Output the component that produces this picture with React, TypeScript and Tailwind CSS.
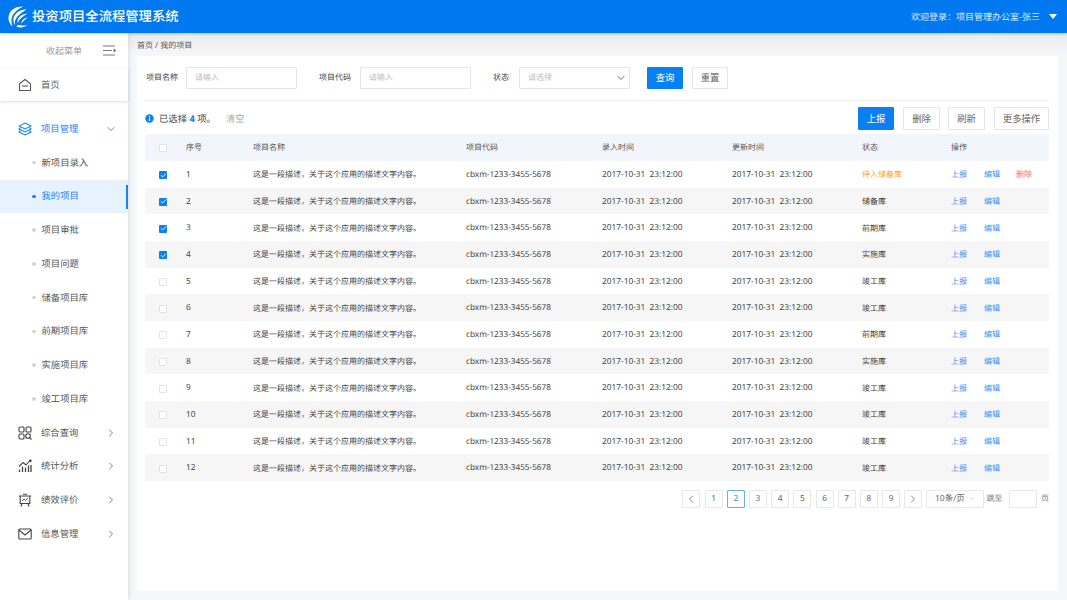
import { ChevronDown, ChevronLeft, ChevronRight, Check } from "lucide-react"
import type { ReactNode } from "react"

const font = "[font-family:'Noto_Sans','Noto_Sans_CJK_SC',sans-serif] [text-rendering:geometricPrecision]"

const subMenu = ["新项目录入", "我的项目", "项目审批", "项目问题", "储备项目库", "前期项目库", "实施项目库", "竣工项目库"]

const rows = [
  { status: "待入储备库", checked: true, remove: true },
  { status: "储备库", checked: true },
  { status: "前期库", checked: true },
  { status: "实施库", checked: true },
  { status: "竣工库" },
  { status: "竣工库" },
  { status: "前期库" },
  { status: "实施库" },
  { status: "竣工库" },
  { status: "竣工库" },
  { status: "竣工库" },
  { status: "竣工库" },
]

function Logo() {
  return (
    <svg width="20" height="22" viewBox="0 0 20 22" fill="#fff">
      <path d="M15 .6C9 .2 3.500 3 1.300 8c-1.800 4-.6 9 3.200 12.500C2.600 15.500 3.200 10.800 6 7.500 8.500 4.500 11.500 2.500 15 .6z" />
      <path d="M18.500 3.500C13.500 3.300 9 5.500 6.600 9.500c-2 3.400-1.600 7 .4 9.800-.6-3.300.3-6.500 2.700-9 2.300-2.500 5.300-4.600 8.800-6.800z" />
      <path d="M19.500 7.500c-3.600.2-6.800 1.700-8.700 4.300-1.300 1.800-1.500 3.700-1 5.500.5-2.300 1.900-4.300 4-5.900 1.600-1.300 3.500-2.500 5.700-3.900z" />
      <path d="M19.600 11.500c-2.600.5-4.600 1.800-5.700 3.600-.5.900-.6 1.700-.4 2.500 1.200-2 3.300-3.800 6.100-6.100z" />
      <path d="M8.500 20.500c3.500 1.500 7.500 1.300 11-1.800-3 .9-6 1.200-9 .4-1-.3-1.700.6-2 1.400z" />
    </svg>
  )
}

function HomeIcon() {
  return (
    <svg width="14" height="14" viewBox="0 0 14 14" fill="none" stroke="#555" strokeWidth="1.100">
      <path d="M1.500 5.800 7 1.500l5.500 4.300v6.700h-11z" />
      <path d="M3.800 8h6.400" />
    </svg>
  )
}

function LayersIcon() {
  return (
    <svg width="14" height="14" viewBox="0 0 14 14" fill="none" stroke="#1a83f0" strokeWidth="1.100">
      <path d="M7 1 13 4 7 7 1 4z" />
      <path d="M2.500 5.500 1 7l6 3 6-3-1.500-1.500" />
      <path d="M2.500 8.500 1 10l6 3 6-3-1.500-1.500" />
    </svg>
  )
}

function QueryIcon() {
  return (
    <svg width="14" height="14" viewBox="0 0 14 14" fill="none" stroke="#444" strokeWidth="1.100">
      <rect x="1" y="1" width="5" height="5" rx="1" />
      <rect x="8" y="1" width="5" height="5" rx="1" />
      <rect x="1" y="8" width="5" height="5" rx="1" />
      <circle cx="10" cy="10" r="2.300" />
      <path d="m11.800 11.800 1.700 1.700" />
    </svg>
  )
}

function StatIcon() {
  return (
    <svg width="14" height="14" viewBox="0 0 14 14" fill="none" stroke="#444" strokeWidth="1.100">
      <path d="M1 7.500 5 3.500l3 2.500 3.500-4" />
      <circle cx="12.300" cy="1.800" r=".8" fill="#444" />
      <path d="M1.500 13v-2.500M4.500 13V7.500M7.500 13V8.500M10.500 13V6.500M13 13V6" strokeWidth="1.300" />
    </svg>
  )
}

function EvalIcon() {
  return (
    <svg width="14" height="14" viewBox="0 0 14 14" fill="none" stroke="#444" strokeWidth="1.100">
      <path d="M.8 3h12.400M2.200 3v7.500h9.600V3M5 1.200h4" />
      <path d="m4 8 2-2 1.500 1.300L10 5" strokeWidth=".9" />
      <path d="m4 10.500-1 3M10 10.500l1 3" />
    </svg>
  )
}

function MailIcon() {
  return (
    <svg width="14" height="14" viewBox="0 0 14 14" fill="none" stroke="#444" strokeWidth="1.100">
      <rect x=".8" y="2" width="12.400" height="10" rx="1" />
      <path d="m1 3 6 5 6-5" />
    </svg>
  )
}

function CollapseIcon() {
  return (
    <svg width="14" height="11" viewBox="0 0 14 11" fill="none" stroke="#777" strokeWidth="1">
      <path d="M0 1h12M0 5.500h9M0 10h12" />
      <path d="m10.500 3.500 3 2-3 2z" fill="#777" stroke="none" />
    </svg>
  )
}

function InfoDot() {
  return (
    <svg width="9" height="9" viewBox="0 0 9 9">
      <circle cx="4.500" cy="4.500" r="4.200" fill="#0a80f5" />
      <path d="M3.900 1.900h1.200v1.100H3.900zM3.900 3.700h1.200v3.400H3.900z" fill="#fff" />
    </svg>
  )
}

function NavRow({ icon, label, active }: { icon: ReactNode; label: string; active?: boolean }) {
  return (
    <div className={`flex h-[33.75px] items-center pl-[18px] pr-[11px] ${active ? "text-[#1a83f0]" : "text-[#555]"}`}>
      <span className="flex w-[14px] justify-center">{icon}</span>
      <span className="ml-[9px] flex-1 text-[9.33px]">{label}</span>
      {active ? <ChevronDown size={12} strokeWidth={1.700} /> : <ChevronRight size={12} strokeWidth={1.500} />}
    </div>
  )
}

function Sidebar() {
  return (
    <aside className="z-10 flex w-[128px] shrink-0 flex-col bg-white shadow-[1px_0_5px_rgba(0,0,0,0.1)]">
      <div className="flex h-[35px] items-center pl-[46px] pr-[11px] text-[9px] text-[#999]">
        <span className="flex-1">收起菜单</span>
        <CollapseIcon />
      </div>
      <div className="flex h-[33px] items-center gap-[9px] rounded-b-[1px] pl-[18px] text-[9.33px] text-[#555] shadow-[0_1px_3px_rgba(26,131,240,0.25)]">
        <span className="flex w-[14px] justify-center"><HomeIcon /></span>
        <span>首页</span>
      </div>
      <div className="mt-[11px]">
        <NavRow icon={<LayersIcon />} label="项目管理" active />
      </div>
      {subMenu.map((name) => {
        const current = name === "我的项目"
        return (
          <div
            key={name}
            className={`relative flex h-[33.75px] items-center pl-[32px] text-[9.33px] ${current ? "bg-[#e6f2fe] text-[#1a83f0]" : "text-[#555]"}`}
          >
            <span className={`mr-[6px] size-[3.500px] rounded-full ${current ? "bg-[#1a83f0]" : "bg-[#d4d4d4]"}`} />
            {name}
            {current && <span className="absolute right-0 top-[5px] h-[24px] w-[2px] bg-[#1a83f0]" />}
          </div>
        )
      })}
      <NavRow icon={<QueryIcon />} label="综合查询" />
      <NavRow icon={<StatIcon />} label="统计分析" />
      <NavRow icon={<EvalIcon />} label="绩效评价" />
      <NavRow icon={<MailIcon />} label="信息管理" />
    </aside>
  )
}

function Btn({ children, primary, className = "" }: { children: ReactNode; primary?: boolean; className?: string }) {
  return (
    <button
      className={`flex h-[22px] items-center justify-center rounded-[1px] text-[9.33px] ${primary ? "bg-[#0a80f5] text-white" : "border border-[#e6e6e6] bg-white text-[#666]"} ${className}`}
    >
      {children}
    </button>
  )
}

function Field({ label, placeholder, labelClass, select }: { label: string; placeholder: string; labelClass: string; select?: boolean }) {
  return (
    <>
      <span className={`text-[8px] text-[#444] ${labelClass}`}>{label}</span>
      <div className="flex h-[22px] w-[111px] items-center justify-between rounded-[1px] border border-[#e6e6e6] pl-[8px] pr-[2px] text-[8px] text-[#bbb]">
        {placeholder}
        {select && <ChevronDown size={12} strokeWidth={1.600} className="text-[#444]" />}
      </div>
    </>
  )
}

function Checkbox({ checked }: { checked?: boolean }) {
  return (
    <span className={`flex size-[8px] items-center justify-center rounded-[1px] ${checked ? "bg-[#0a80f5]" : "border border-[#e3e3e3] bg-white"}`}>
      {checked && <Check size={7} strokeWidth={3} className="text-white" />}
    </span>
  )
}

const tableCols = "grid-cols-[41px_67px_213px_136px_130px_130px_89px_33px_32px_33px]"

function Table() {
  return (
    <div className="mt-[4px] text-[8px] text-[#444]">
      <div className={`grid h-[27px] items-center bg-[#f2f5fc] pt-[1px] text-[#555] ${tableCols}`}>
        <span className="flex pl-[14px]"><Checkbox /></span>
        <span>序号</span>
        <span>项目名称</span>
        <span>项目代码</span>
        <span>录入时间</span>
        <span>更新时间</span>
        <span>状态</span>
        <span>操作</span>
      </div>
      {rows.map((row, i) => (
        <div key={i} className={`grid h-[26.67px] items-center pt-[2px] ${tableCols} ${i % 2 ? "bg-[#f6f6f6]" : "bg-white"}`}>
          <span className="flex pl-[14px]"><Checkbox checked={row.checked} /></span>
          <span className="text-[8.3px]">{i + 1}</span>
          <span>这是一段描述，关于这个应用的描述文字内容。</span>
          <span className="text-[8.2px]">cbxm-1233-3455-5678</span>
          <span className="text-[8.3px]">2017-10-31&nbsp;&nbsp;23:12:00</span>
          <span className="text-[8.3px]">2017-10-31&nbsp;&nbsp;23:12:00</span>
          <span className={row.remove ? "text-[#f9a63a]" : ""}>{row.status}</span>
          <span className="text-[#2f8ff2]">上报</span>
          <span className="text-[#2f8ff2]">编辑</span>
          {row.remove && <span className="text-[#f56c7a]">删除</span>}
        </div>
      ))}
    </div>
  )
}

function PageBox({ children, active }: { children: ReactNode; active?: boolean }) {
  return (
    <span className={`flex size-[18px] items-center justify-center rounded-[1px] border text-[8.3px] ${active ? "border-[#66aef7] text-[#2f8ff2]" : "border-[#e8e8e8] text-[#666]"}`}>
      {children}
    </span>
  )
}

function Pagination() {
  return (
    <div className="mt-[9px] flex items-center justify-end gap-[4.200px] text-[8px] text-[#777]">
      <PageBox><ChevronLeft size={12} strokeWidth={1.500} className="text-[#555]" /></PageBox>
      {[1, 2, 3, 4, 5, 6, 7, 8, 9].map((n) => (
        <PageBox key={n} active={n === 2}>{n}</PageBox>
      ))}
      <PageBox><ChevronRight size={12} strokeWidth={1.500} className="text-[#555]" /></PageBox>
      <span className="flex h-[18px] w-[58px] items-center justify-center gap-[2px] rounded-[1px] border border-[#e8e8e8] text-[8.5px] text-[#666]">
        10条/页
        <ChevronDown size={9} strokeWidth={1} className="text-[#aaa]" />
      </span>
      <span className="ml-[-2px]">跳至</span>
      <span className="ml-[2px] h-[18px] w-[28px] rounded-[1px] border border-[#e8e8e8]" />
      <span>页</span>
    </div>
  )
}

export default function App() {
  return (
    <div className={`flex h-[600px] w-[1067px] flex-col overflow-hidden bg-[#f6f7f9] ${font}`}>
      <header className="z-20 flex h-[33px] shrink-0 items-center bg-[#0078f0] pl-[8px] pr-[10px] text-white shadow-[0_1px_3px_rgba(0,0,0,0.2)]">
        <Logo />
        <span className="ml-[4px] flex-1 text-[13.33px] font-medium">投资项目全流程管理系统</span>
        <span className="text-[9px] text-[#dcebff]">欢迎登录：项目管理办公室-张三</span>
        <span className="ml-[9px] h-0 w-0 border-x-[4px] border-t-[5px] border-x-transparent border-t-white" />
      </header>
      <div className="flex min-h-0 flex-1">
        <Sidebar />
        <main className="flex min-w-0 flex-1 flex-col bg-[linear-gradient(#e9eaef,#f6f7f9_22px)] pb-[9px] pl-[9px] pr-[9px]">
          <div className="flex h-[23px] shrink-0 items-center pt-[2px] text-[8px] text-[#555]">首页 / 我的项目</div>
          <section className="flex-1 bg-white pl-[8px] pr-[9px]">
            <div className="flex h-[45px] items-center border-b border-[#f1f1f1] pb-[1px]">
              <Field label="项目名称" placeholder="请输入" labelClass="ml-[1px] w-[40px]" />
              <Field label="项目代码" placeholder="请输入" labelClass="ml-[22px] w-[41px]" />
              <Field label="状态" placeholder="请选择" labelClass="ml-[22px] w-[26px]" select />
              <Btn primary className="ml-[17px] w-[36px]">查询</Btn>
              <Btn className="ml-[9px] w-[36px]">重置</Btn>
            </div>
            <div className="mt-[6px] flex h-[23px] items-center text-[9.33px] text-[#444]">
              <InfoDot />
              <span className="ml-[5px]">已选择 <b className="font-bold text-[#0a80f5]">4</b> 项。</span>
              <span className="ml-[10px] text-[#aaa]">清空</span>
              <div className="ml-auto flex">
                <Btn primary className="!h-[23px] w-[36px]">上报</Btn>
                <Btn className="ml-[9px] !h-[23px] w-[37px]">删除</Btn>
                <Btn className="ml-[8px] !h-[23px] w-[37px]">刷新</Btn>
                <Btn className="ml-[9px] !h-[23px] w-[55px]">更多操作</Btn>
              </div>
            </div>
            <Table />
            <Pagination />
          </section>
        </main>
      </div>
    </div>
  )
}
